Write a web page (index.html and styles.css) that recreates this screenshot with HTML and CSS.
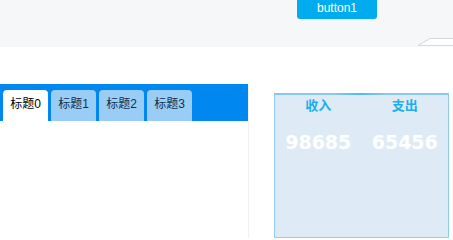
FILE: index.html
```html
<!DOCTYPE html>
<html>
<head>
<meta charset="utf-8">
<link rel="stylesheet" href="styles.css">
</head>
<body>
<div class="header">
  <div class="btn">button1</div>
  <svg class="corner" width="35" height="9" viewBox="0 0 35 9"><path d="M0 8.5 L12 0.5 H35 V8.5 Z" fill="#ffffff"/><path d="M0 7.5 L12 0.5 H35" fill="none" stroke="#d3d9df" stroke-width="1"/><path d="M0 7.5 H35" stroke="#d3d9df" stroke-width="1"/></svg>
</div>
<div class="main">
  <div class="left">
    <div class="tabbar">
      <div class="tab active">标题0</div>
      <div class="tab">标题1</div>
      <div class="tab">标题2</div>
      <div class="tab">标题3</div>
    </div>
  </div>
  <div class="stats">
    <div class="col">
      <div class="label">收入</div>
      <div class="num">98685</div>
    </div>
    <div class="col">
      <div class="label">支出</div>
      <div class="num">65456</div>
    </div>
  </div>
</div>
</body>
</html>
```
FILE: styles.css
```css
html, body {
  margin: 0;
  padding: 0;
  background: #ffffff;
  overflow: hidden;
  height: 238px;
  font-family: "Liberation Sans", "Noto Sans CJK SC", sans-serif;
}
.header {
  position: relative;
  height: 47px;
  background: #f5f7f9;
  display: flex;
  align-items: flex-start;
  padding-left: 297px;
  box-sizing: border-box;
}
.btn {
  width: 80px;
  height: 19px;
  background: #00acee;
  color: #ffffff;
  font-size: 12px;
  line-height: 17px;
  text-align: center;
  border-radius: 0 0 3px 3px;
}
.corner {
  position: absolute;
  right: 0;
  bottom: 0;
  display: block;
}
.main {
  display: flex;
  align-items: flex-start;
  margin-top: 37px;
  height: 154px;
}
.left {
  width: 248px;
  height: 154px;
  border-right: 1px solid #f1f1f1;
}
.tabbar {
  height: 37px;
  background: #0087f0;
  display: flex;
  align-items: flex-end;
  gap: 3px;
  padding-left: 3px;
}
.tab {
  width: 45px;
  height: 31px;
  background: #99cdf6;
  border-radius: 4px 4px 0 0;
  color: #10304f;
  font-size: 12px;
  line-height: 29px;
  text-align: center;
}
.tab.active {
  background: #ffffff;
  color: #000000;
}
.stats {
  position: relative;
  margin-left: 25px;
  margin-top: 9px;
  width: 175px;
  height: 145px;
  box-sizing: border-box;
  background: #deebf6;
  border: 1px solid #92cbef;
  border-top: 2px solid #86c6f0;
  display: grid;
  grid-template-columns: 1fr 1fr;
  align-content: start;
}
.stats::before {
  content: "";
  position: absolute;
  left: 60px;
  top: -2px;
  width: 50px;
  height: 2px;
  background: linear-gradient(90deg, rgba(80,190,255,0), #4cbcff, rgba(80,190,255,0));
}
.col {
  display: flex;
  flex-direction: column;
  align-items: center;
}
.label {
  color: #1aaef0;
  font-weight: bold;
  font-size: 13px;
  line-height: 22px;
}
.num {
  color: #ffffff;
  font-family: "DejaVu Sans", sans-serif;
  font-weight: bold;
  font-size: 19px;
  line-height: 50px;
}
```
